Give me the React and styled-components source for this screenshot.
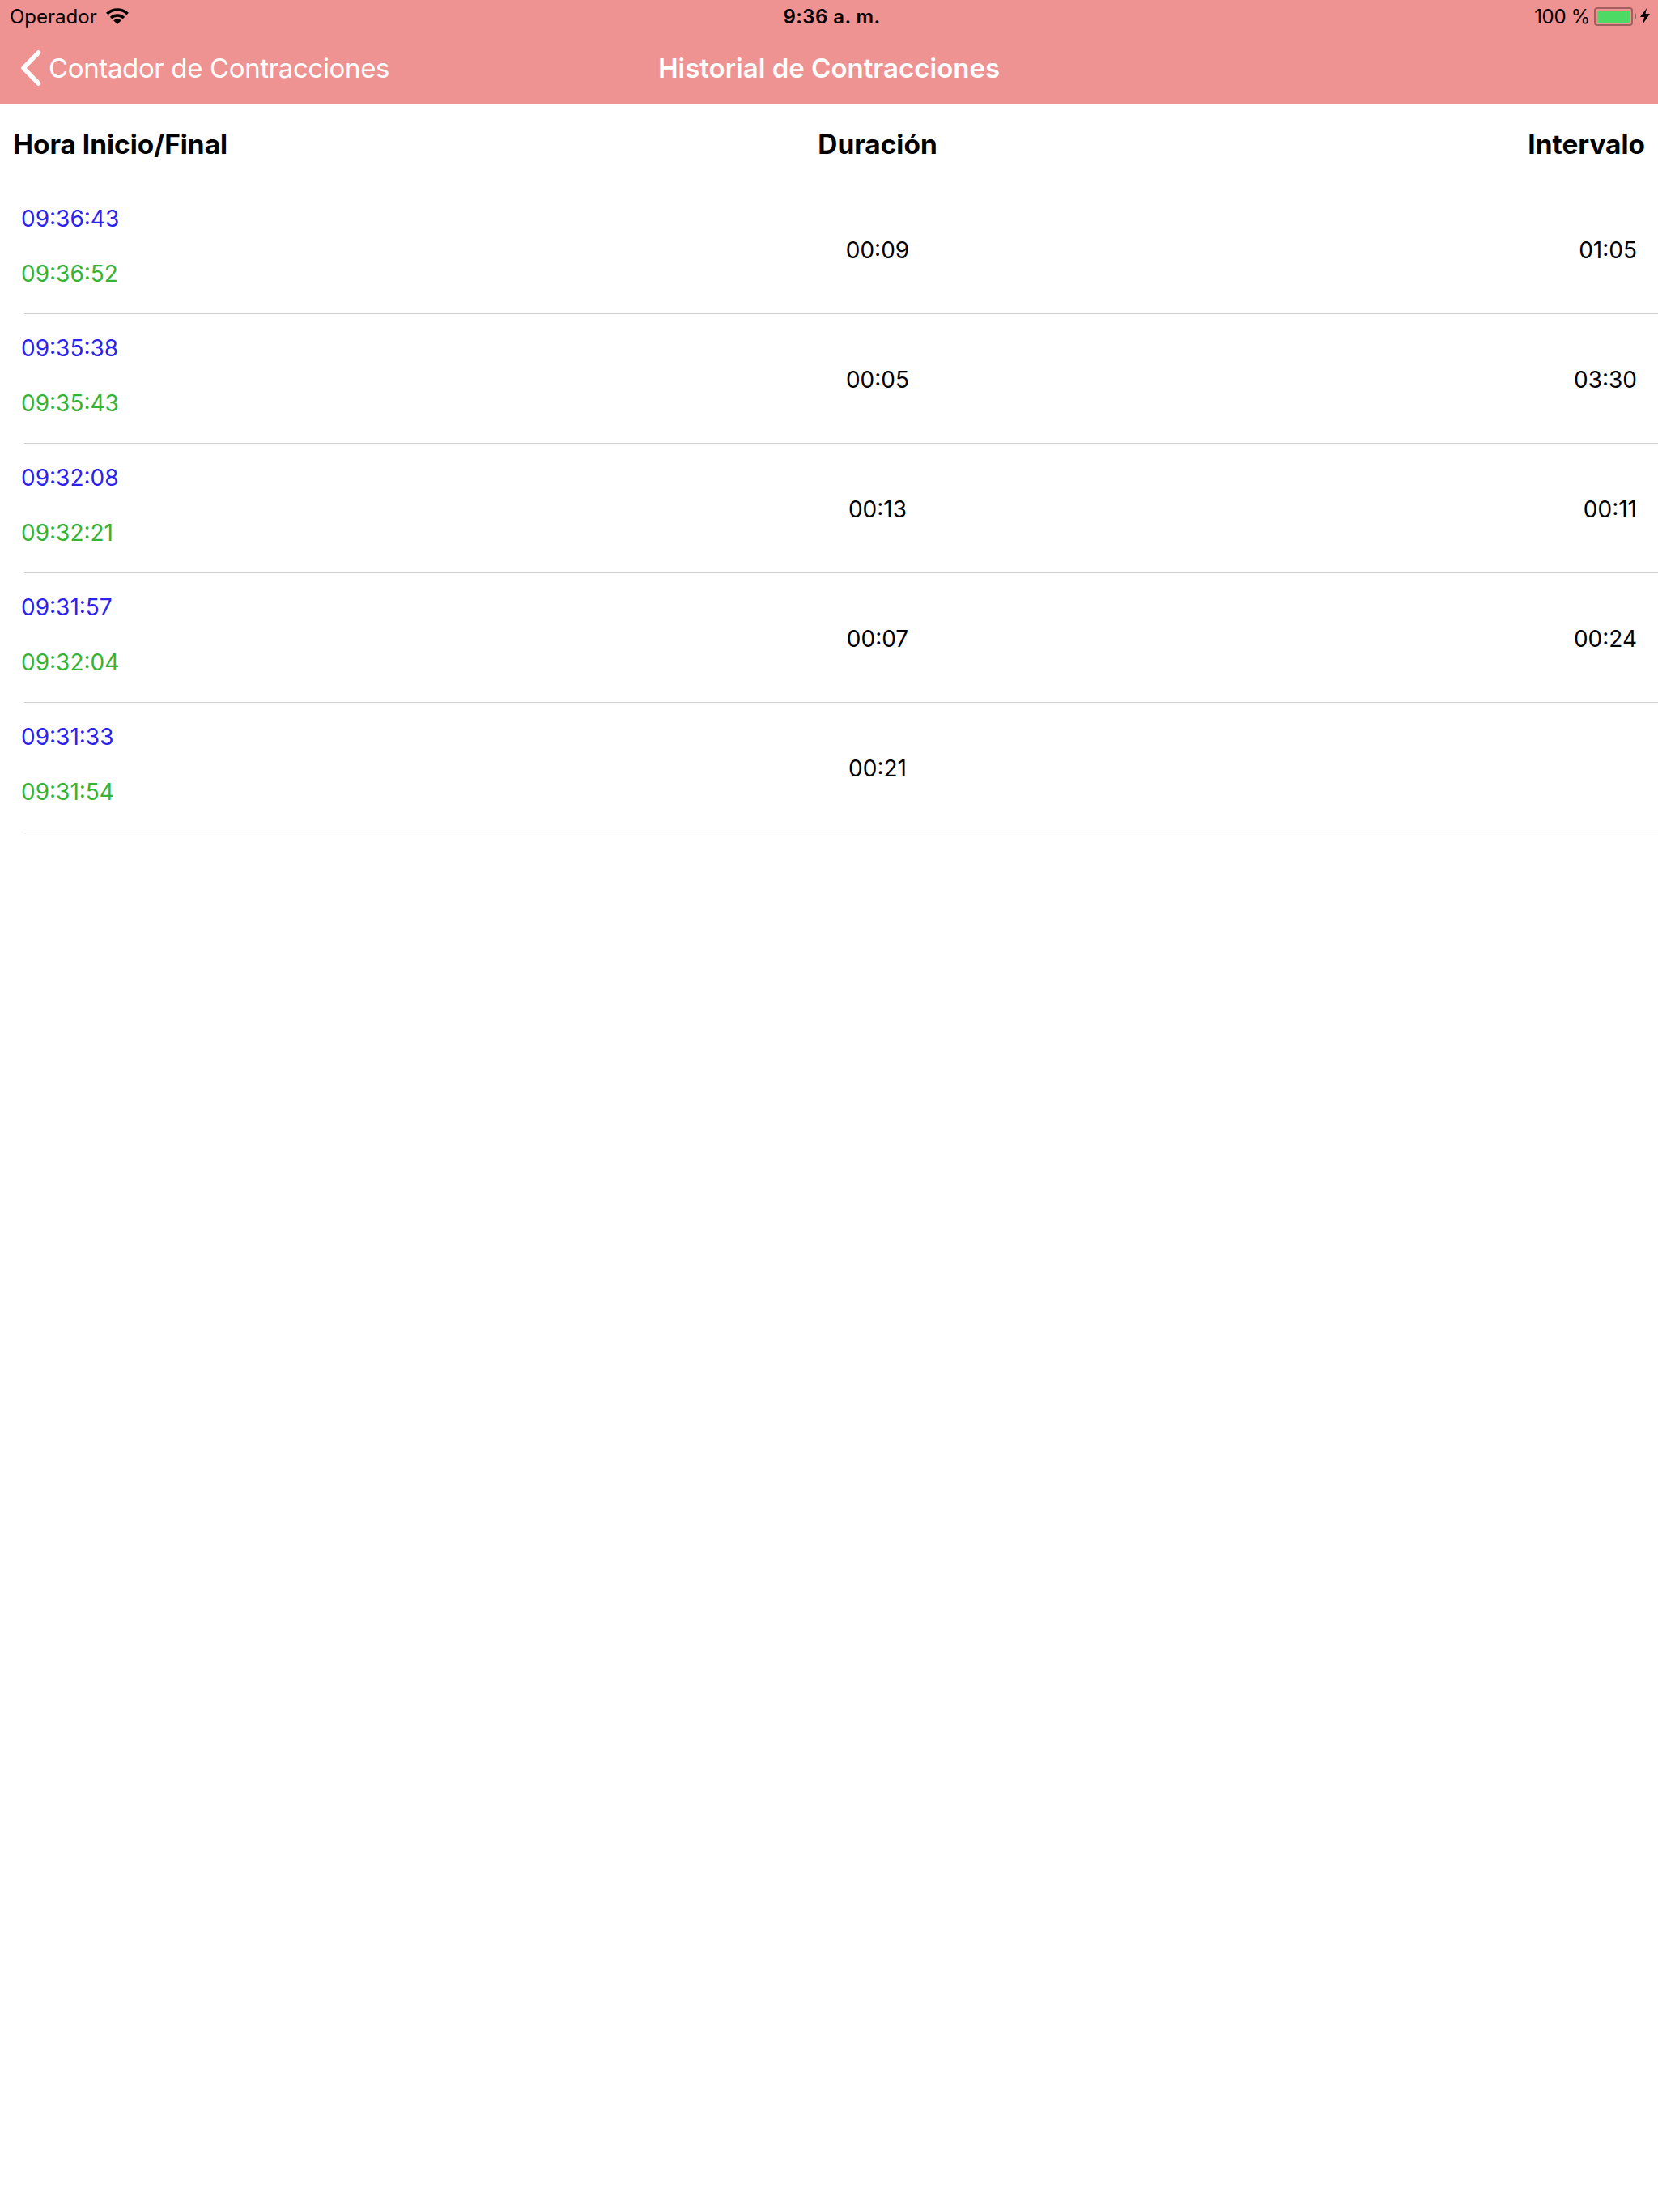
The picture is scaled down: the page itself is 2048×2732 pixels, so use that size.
import React from "react";
import styled, { createGlobalStyle } from "styled-components";

const Global = createGlobalStyle`
  html, body { margin: 0; padding: 0; background: #fff; }
  body { font-family: Inter, "Liberation Sans", sans-serif; }
`;

const Page = styled.div`
  width: 2048px;
  height: 2732px;
  background: #fff;
  overflow: hidden;
`;

const TopBar = styled.header`
  height: 128px;
  background: #ef9292;
  border-bottom: 1px solid #b0a8a8;
  display: flex;
  flex-direction: column;
`;

const StatusBar = styled.div`
  height: 40px;
  display: grid;
  grid-template-columns: 1fr auto 1fr;
  align-items: center;
  padding: 0 10px 0 12px;
  font-size: 24px;
  color: #000;
`;

const StatusLeft = styled.div`
  display: flex;
  align-items: center;
  gap: 11px;
`;

const StatusTime = styled.div`
  font-weight: 600;
  letter-spacing: 0.4px;
  padding-left: 5px;
`;

const StatusRight = styled.div`
  display: flex;
  align-items: center;
  justify-content: flex-end;
  gap: 5px;
`;

const BatteryLabel = styled.span`
  letter-spacing: -0.3px;
`;

const NavBar = styled.div`
  flex: 1;
  display: grid;
  grid-template-columns: 1fr auto 1fr;
  align-items: center;
  color: #fff;
  font-size: 33px;
`;

const BackLink = styled.div`
  display: flex;
  align-items: center;
  gap: 8px;
  padding-left: 25px;
  letter-spacing: -0.36px;
`;

const NavTitle = styled.div`
  font-weight: 600;
`;

const ColumnHeads = styled.div`
  height: 99px;
  box-sizing: border-box;
  display: grid;
  grid-template-columns: 918px 300px 1fr;
  align-items: center;
  padding: 0 16px 1px;
  font-size: 33.4px;
  font-weight: 700;
  color: #000;
`;

const Head = styled.div`
  text-align: ${(p) => p.$align};
`;

const Row = styled.div`
  height: 159px;
  border-bottom: 1px solid #d0d0d0;
  margin-left: 30px;
  display: grid;
  grid-template-columns: 904px 300px 1fr;
  align-items: center;
  padding-right: 26px;
  font-size: 28px;
  color: #000;
`;

const Times = styled.div`
  display: flex;
  flex-direction: column;
  gap: 33px;
  margin: -6px 0 0 -4px;
`;

const Time = styled.div`
  color: ${(p) => p.$color};
  line-height: 35px;
`;

const Cell = styled.div`
  text-align: ${(p) => p.$align};
  padding-top: 3px;
`;

const BatteryBody = styled.div`
  width: 48px;
  height: 23px;
  box-sizing: border-box;
  border: 2px solid #a06060;
  border-radius: 4px;
  padding: 2px;
  display: flex;
`;

const BatteryFill = styled.div`
  flex: 1;
  background: #4cd964;
  border-radius: 1.5px;
`;

const Battery = styled.div`
  display: flex;
  align-items: center;
  gap: 2px;
`;

const BatteryTip = styled.div`
  width: 2px;
  height: 8px;
  background: #a06060;
  border-radius: 0 2px 2px 0;
`;

const rows = [
  ["09:36:43", "09:36:52", "00:09", "01:05"],
  ["09:35:38", "09:35:43", "00:05", "03:30"],
  ["09:32:08", "09:32:21", "00:13", "00:11"],
  ["09:31:57", "09:32:04", "00:07", "00:24"],
  ["09:31:33", "09:31:54", "00:21", ""],
];

const Wifi = () => (
  <svg width="28" height="20" viewBox="0 0 28 20" fill="none" stroke="#000" strokeWidth="3.6">
    <path d="M1.3 7 C8.5 0.4 19.5 0.4 26.7 7" />
    <path d="M6 12 C10.5 8 17.5 8 22 12" />
    <path d="M9.2 15.2 L14 20 L18.8 15.2 C16 12.8 12 12.8 9.2 15.2Z" fill="#000" stroke="none" />
  </svg>
);

const Chevron = () => (
  <svg width="27" height="44" viewBox="0 0 27 44" fill="none" stroke="#fff" strokeWidth="5.5" strokeLinecap="round" strokeLinejoin="round">
    <path d="M22.5 3 L4 22 L22.5 41" />
  </svg>
);

const Bolt = () => (
  <svg width="12" height="20" viewBox="0 0 12 20" fill="#000">
    <path d="M8 0 L0 11 L5 11 L3 20 L12 7 L6.5 7 Z" />
  </svg>
);

export default function App() {
  return (
    <Page>
      <Global />
      <TopBar>
        <StatusBar>
          <StatusLeft>
            <span>Operador</span>
            <Wifi />
          </StatusLeft>
          <StatusTime>9:36 a. m.</StatusTime>
          <StatusRight>
            <BatteryLabel>100 %</BatteryLabel>
            <Battery>
              <BatteryBody>
                <BatteryFill />
              </BatteryBody>
              <BatteryTip />
            </Battery>
            <Bolt />
          </StatusRight>
        </StatusBar>
        <NavBar>
          <BackLink>
            <Chevron />
            <span>Contador de Contracciones</span>
          </BackLink>
          <NavTitle>Historial de Contracciones</NavTitle>
          <span />
        </NavBar>
      </TopBar>
      <ColumnHeads>
        <Head $align="left">Hora Inicio/Final</Head>
        <Head $align="center">Duración</Head>
        <Head $align="right">Intervalo</Head>
      </ColumnHeads>
      {rows.map((r) => (
        <Row key={r[0]}>
          <Times>
            <Time $color="#2b22ee">{r[0]}</Time>
            <Time $color="#34b334">{r[1]}</Time>
          </Times>
          <Cell $align="center">{r[2]}</Cell>
          <Cell $align="right">{r[3]}</Cell>
        </Row>
      ))}
    </Page>
  );
}
